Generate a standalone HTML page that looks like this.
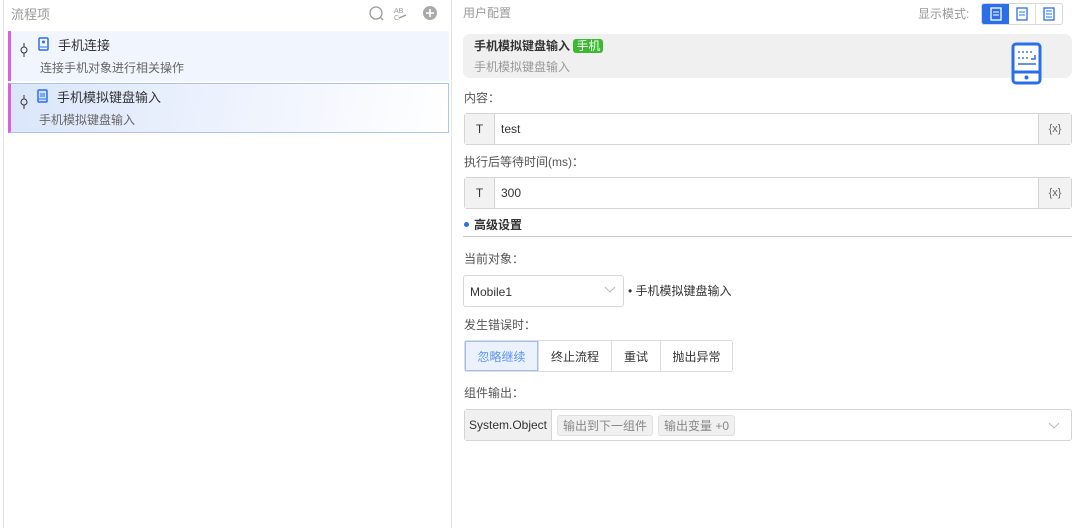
<!DOCTYPE html>
<html><head><meta charset="utf-8"><style>
*{box-sizing:border-box;margin:0;padding:0}
body{width:1081px;height:528px;background:#fff;font-family:"Liberation Sans","Noto Sans CJK SC",sans-serif;font-size:12px;color:#333;position:relative;overflow:hidden}
.a{position:absolute}
.lp{left:3px;top:0;width:449px;height:528px;border-left:1px solid #e4e4e4;border-right:1px solid #e4e4e4}
.item{left:8px;width:441px;height:50px}
.lbl{left:464px;color:#555;font-size:12px}
.inp{left:464px;width:608px;height:32px;border:1px solid #d4d4d4;border-radius:3px;display:flex;align-items:center}
.inp .t{width:30px;height:100%;background:#f2f2f2;border-right:1px solid #d4d4d4;display:flex;align-items:center;justify-content:center;color:#333}
.inp .v{flex:1;padding-left:6px}
.inp .x{width:33px;height:100%;background:#f2f2f2;border-left:1px solid #d4d4d4;display:flex;align-items:center;justify-content:center;color:#666;font-size:11px}
.bg{display:flex;left:464px;top:340px;height:32px;border:1px solid #dcdcdc;border-radius:3px}
.bg div{display:flex;align-items:center;justify-content:center;border-left:1px solid #dcdcdc;font-size:12px}
.tag{background:#f0f0f0;border:1px solid #e0e0e0;border-radius:3px;color:#888;padding:1px 5px;margin-left:5px;font-size:12px}
</style></head><body>
<div class="a lp"></div>
<div class="a" style="left:11px;top:4px;color:#999;font-size:13px">流程项</div>
<svg class="a" style="left:368px;top:5px" width="70" height="16">
<circle cx="8" cy="8" r="6" fill="none" stroke="#999" stroke-width="1.3"/><line x1="12" y1="12" x2="15" y2="15" stroke="#999" stroke-width="1.3"/>
<text x="26" y="8" font-size="7" fill="#999" font-family="Liberation Sans">AB</text><text x="26" y="15" font-size="7" fill="#999" font-family="Liberation Sans">C</text><path d="M31 13 L38 10" stroke="#999" stroke-width="1.3"/>
<circle cx="62" cy="8" r="7" fill="#aaa"/><path d="M62 4v8M58 8h8" stroke="#fff" stroke-width="1.6"/>
</svg>
<div class="a item" style="top:31px;background:#f1f5fd;border-left:3px solid #d960e0"></div>
<div class="a item" style="top:83px;background:linear-gradient(100deg,#dbe6fb,#fff);border:1px solid #a9c4f5;border-left:3px solid #d960e0"></div>
<svg class="a" style="left:19px;top:42px" width="10" height="16"><circle cx="5" cy="8" r="3" fill="none" stroke="#333"/><path d="M5 1v4M5 11v4" stroke="#333"/></svg>
<svg class="a" style="left:19px;top:94px" width="10" height="16"><circle cx="5" cy="8" r="3" fill="none" stroke="#333"/><path d="M5 1v4M5 11v4" stroke="#333"/></svg>
<svg class="a" style="left:38px;top:37px" width="11" height="14"><rect x="1" y="1" width="9" height="12" rx="1" fill="none" stroke="#2b6fe8" stroke-width="1.5"/><circle cx="5.5" cy="5" r="1.5" fill="#2b6fe8"/><path d="M2 10h7" stroke="#2b6fe8"/></svg>
<svg class="a" style="left:37px;top:89px" width="11" height="14"><rect x="1" y="1" width="9" height="12" rx="1" fill="#cfe0fb" stroke="#2b6fe8" stroke-width="1.5"/><path d="M3 5h5M3 7h5M2 10h7" stroke="#2b6fe8"/></svg>
<div class="a" style="left:58px;top:35px;font-size:13px;color:#333">手机连接</div>
<div class="a" style="left:40px;top:59px;color:#666">连接手机对象进行相关操作</div>
<div class="a" style="left:57px;top:87px;font-size:13px;color:#333">手机模拟键盘输入</div>
<div class="a" style="left:39px;top:111px;color:#666">手机模拟键盘输入</div>

<div class="a" style="left:463px;top:4px;color:#999">用户配置</div>
<div class="a" style="left:918px;top:5px;color:#999">显示模式:</div>
<div class="a" style="left:981px;top:3px;width:82px;height:22px;border:1px solid #d8d8d8;border-radius:3px;display:flex">
<div style="width:28px;background:#2b6fe8;border-radius:2px 0 0 2px;display:flex;align-items:center;justify-content:center"><svg width="12" height="14"><rect x="1" y="1" width="10" height="12" fill="none" stroke="#fff" stroke-width="1.3"/><path d="M3 5h6M3 8h6" stroke="#fff"/></svg></div>
<div style="width:27px;border-right:1px solid #ddd;display:flex;align-items:center;justify-content:center"><svg width="12" height="14"><rect x="1" y="1" width="10" height="12" fill="none" stroke="#2b6fe8" stroke-width="1.3"/><path d="M3 5h6M3 8h6" stroke="#2b6fe8"/></svg></div>
<div style="width:27px;display:flex;align-items:center;justify-content:center"><svg width="12" height="14"><rect x="1" y="1" width="10" height="12" fill="none" stroke="#2b6fe8" stroke-width="1.3"/><path d="M3 4h6M3 7h6M3 10h6" stroke="#2b6fe8"/></svg></div>
</div>
<div class="a" style="left:463px;top:34px;width:609px;height:44px;background:#f0f0f0;border-radius:7px"></div>
<div class="a" style="left:474px;top:37px;font-weight:bold;color:#333">手机模拟键盘输入 <span style="background:#3cb832;color:#fff;font-weight:normal;border-radius:3px;padding:0 3px;font-size:12px">手机</span></div>
<div class="a" style="left:474px;top:58px;color:#999">手机模拟键盘输入</div>
<svg class="a" style="left:1011px;top:42px" width="32" height="43"><rect x="2" y="2" width="27" height="39" rx="3" fill="#fff" stroke="#2b6fe8" stroke-width="3"/><path d="M2 30h27" stroke="#2b6fe8" stroke-width="3"/><circle cx="15.5" cy="35.5" r="2" fill="#2b6fe8"/><path d="M7 22h18" stroke="#2b6fe8" stroke-width="1.5"/><g fill="#5b8ff0"><circle cx="8" cy="10" r="1.1"/><circle cx="12" cy="10" r="1.1"/><circle cx="16" cy="10" r="1.1"/><circle cx="20" cy="10" r="1.1"/><circle cx="8" cy="16" r="1.1"/><circle cx="12" cy="16" r="1.1"/><circle cx="16" cy="16" r="1.1"/></g><path d="M24 13v4h-4" fill="none" stroke="#2b6fe8" stroke-width="1.5"/></svg>

<div class="a lbl" style="top:89px">内容：</div>
<div class="a inp" style="top:113px"><div class="t">T</div><div class="v">test</div><div class="x">{x}</div></div>
<div class="a lbl" style="top:153px">执行后等待时间(ms)：</div>
<div class="a inp" style="top:177px"><div class="t">T</div><div class="v">300</div><div class="x">{x}</div></div>
<div class="a" style="left:464px;top:222px;width:5px;height:5px;border-radius:50%;background:#2b6fe8"></div>
<div class="a" style="left:474px;top:216px;font-weight:bold;color:#333">高级设置</div>
<div class="a" style="left:463px;top:236px;width:609px;height:1px;background:#ccc"></div>
<div class="a lbl" style="top:250px">当前对象：</div>
<div class="a" style="left:463px;top:275px;width:161px;height:32px;border:1px solid #d8d8d8;border-radius:3px;padding:9px 6px;color:#333">Mobile1</div>
<svg class="a" style="left:604px;top:286px" width="12" height="8"><path d="M1 1l5 5 5-5" fill="none" stroke="#bbb"/></svg>
<div class="a" style="left:628px;top:282px;color:#333">• 手机模拟键盘输入</div>
<div class="a lbl" style="top:316px">发生错误时：</div>
<div class="a bg"><div style="width:73px;border:none;background:#ebf2fd;color:#5a93ee;box-shadow:inset 0 0 0 1px #9ec0f5">忽略继续</div><div style="width:73px">终止流程</div><div style="width:49px">重试</div><div style="width:72px">抛出异常</div></div>
<div class="a lbl" style="top:384px">组件输出：</div>
<div class="a" style="left:464px;top:409px;width:608px;height:32px;border:1px solid #d4d4d4;border-radius:3px;display:flex;align-items:center">
<div style="width:87px;height:100%;background:#f0f0f0;border-right:1px solid #d4d4d4;display:flex;align-items:center;justify-content:center;color:#333">System.Object</div>
<span class="tag">输出到下一组件</span><span class="tag">输出变量 +0</span></div>
<svg class="a" style="left:1048px;top:422px" width="12" height="8"><path d="M1 1l5 5 5-5" fill="none" stroke="#bbb"/></svg>
</body></html>
